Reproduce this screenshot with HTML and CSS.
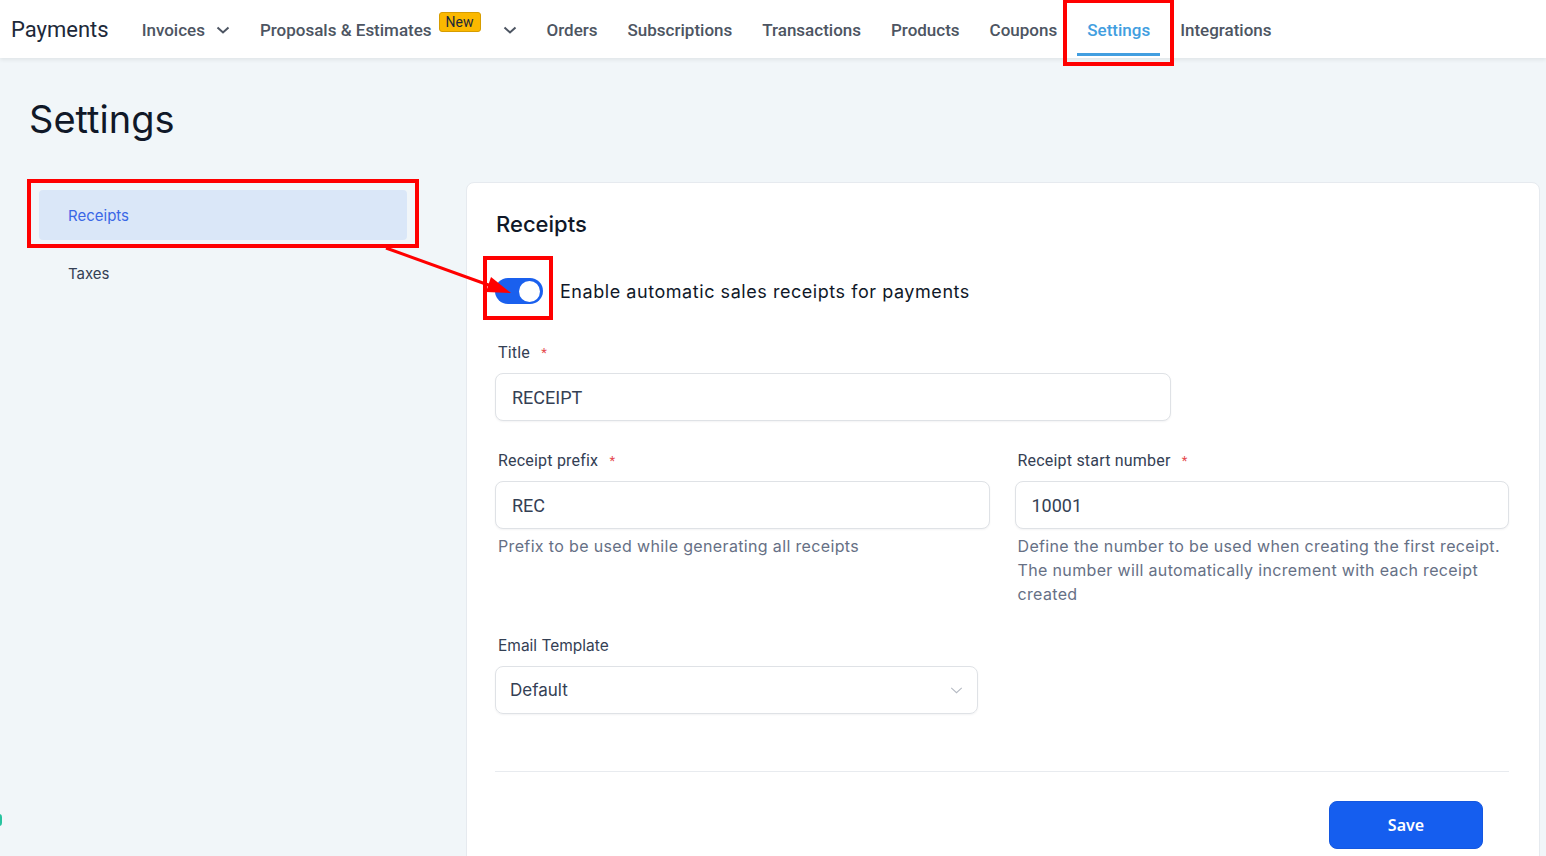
FILE: index.html
```html
<!DOCTYPE html>
<html lang="en">
<head>
  <meta charset="UTF-8" />
  <meta name="viewport" content="width=device-width, initial-scale=1.0" />
  <title>Payments - Settings</title>
  <link rel="stylesheet" href="styles.css">
</head>
<body>
  <header class="topbar">
    <div class="brand">Payments</div>
    <nav class="tabs">
      <a class="tab">Invoices
        <svg class="chev" viewBox="0 0 14 8"><path d="M1.5 1.5 7 6.5l5.5-5"/></svg>
      </a>
      <a class="tab">Proposals &amp; Estimates
        <span class="badge">New</span>
        <svg class="chev chev-far" viewBox="0 0 14 8"><path d="M1.5 1.5 7 6.5l5.5-5"/></svg>
      </a>
      <a class="tab">Orders</a>
      <a class="tab">Subscriptions</a>
      <a class="tab">Transactions</a>
      <a class="tab">Products</a>
      <a class="tab">Coupons</a>
      <a class="tab active marked">Settings</a>
      <a class="tab">Integrations</a>
    </nav>
  </header>

  <main class="page">
    <h1 class="page-title">Settings</h1>

    <div class="layout">
      <aside class="side-menu">
        <a class="side-item active marked">Receipts</a>
        <a class="side-item">Taxes</a>
      </aside>

      <section class="card">
        <h2>Receipts</h2>

        <div class="switch-row">
          <span class="switch on marked"><span class="knob"></span></span>
          <span class="switch-label">Enable automatic sales receipts for payments</span>
        </div>

        <div class="field field-title">
          <label>Title <span class="req">*</span></label>
          <input class="input" type="text" value="RECEIPT" />
        </div>

        <div class="field-row">
          <div class="field">
            <label>Receipt prefix <span class="req">*</span></label>
            <input class="input" type="text" value="REC" />
            <p class="help">Prefix to be used while generating all receipts</p>
          </div>
          <div class="field">
            <label>Receipt start number <span class="req">*</span></label>
            <input class="input" type="text" value="10001" />
            <p class="help">Define the number to be used when creating the first receipt. The number will automatically increment with each receipt created</p>
          </div>
        </div>

        <div class="field field-email">
          <label class="label-inter">Email Template</label>
          <div class="select">
            <span>Default</span>
            <svg class="select-chev" viewBox="0 0 14 8"><path d="M1 1l6 5.5L13 1"/></svg>
          </div>
        </div>

        <hr class="divider" />

        <div class="card-footer">
          <button class="btn-save">Save</button>
        </div>
      </section>
    </div>
  </main>

  <!-- callout arrow from the side menu to the switch -->
  <svg class="callout" viewBox="0 0 1546 856">
    <line x1="386" y1="248" x2="494" y2="287" stroke="#f00" stroke-width="3"/>
    <polygon points="511,293 491,277 486,292" fill="#f00"/>
  </svg>

  <span class="chat-blip"></span>
</body>
</html>
```

FILE: styles.css
```css
* {
  box-sizing: border-box;
  margin: 0;
  padding: 0;
}

body {
  font-family: Inter, "Noto Sans", sans-serif;
  background: #f1f6f9;
  color: #101828;
  height: 100vh;
  overflow: hidden;
  position: relative;
}

a {
  text-decoration: none;
  color: inherit;
}

/* top navigation */
.topbar {
  display: flex;
  align-items: center;
  height: 58px;
  padding-left: 11px;
  background: #fff;
  box-shadow: 0 2px 4px rgba(0, 0, 0, 0.07);
  position: relative;
  z-index: 2;
}

.brand {
  font-family: Roboto, sans-serif;
  font-size: 22px;
  color: #1d2939;
  margin-right: 23px;
}

.tabs {
  display: flex;
  gap: 10px;
  height: 100%;
}

.tab {
  display: flex;
  align-items: center;
  height: 100%;
  padding: 1px 10px 0;
  font-family: Roboto, sans-serif;
  font-size: 17px;
  font-weight: 500;
  color: #4d5562;
  position: relative;
}

.tab.active {
  color: #429ee0;
}

.tab.active::before {
  content: "";
  position: absolute;
  left: 0;
  right: 0;
  bottom: 2px;
  height: 3px;
  background: #429ee0;
}

.chev {
  width: 14px;
  height: 8px;
  margin-left: 11px;
  fill: none;
  stroke: #4d5562;
  stroke-width: 2;
}

.chev-far {
  margin-left: 22px;
}

.badge {
  align-self: flex-start;
  margin: 11px 0 0 7px;
  padding: 0 6px;
  height: 20px;
  line-height: 18px;
  font-size: 14px;
  font-weight: 400;
  color: #1d2939;
  background: #fbb800;
  border: 1px solid #d79d00;
  border-radius: 3px;
}

/* red highlight frames */
.marked {
  position: relative;
}

.tab.marked::after {
  content: "";
  position: absolute;
  top: 0;
  left: -14px;
  right: -14px;
  bottom: -8px;
  border: 4px solid #f00;
  border-top-width: 3px;
}

.side-item.marked::after {
  content: "";
  position: absolute;
  top: -11px;
  left: -12px;
  right: -12px;
  bottom: -8px;
  border: 4px solid #f00;
}

.switch.marked::after {
  content: "";
  position: absolute;
  top: -22px;
  left: -12px;
  right: -10px;
  bottom: -16px;
  border: 4px solid #f00;
}

.callout {
  position: absolute;
  left: 0;
  top: 0;
  width: 1546px;
  height: 856px;
  pointer-events: none;
  z-index: 3;
}

/* page */
.page {
  padding: 0 6px 0 31px;
}

.page-title {
  font-size: 38px;
  font-weight: 400;
  line-height: 48px;
  color: #101828;
  margin: 37px 0 39px -2px;
}

.layout {
  display: flex;
  align-items: flex-start;
  gap: 59px;
}

.side-menu {
  width: 376px;
  padding: 8px 0 0 8px;
  display: flex;
  flex-direction: column;
  gap: 8px;
}

.side-item {
  display: flex;
  align-items: center;
  height: 50px;
  padding-left: 29px;
  border-radius: 4px;
  font-size: 15px;
  color: #344054;
}

.side-item.active {
  background: #dae7f8;
  color: #3a67e6;
}

/* settings card */
.card {
  flex: 1;
  min-height: 720px;
  background: #fff;
  border: 1px solid #e6eaef;
  border-radius: 8px;
  padding: 27px 30px 40px 28px;
}

.card h2 {
  font-size: 22px;
  font-weight: 500;
  line-height: 28px;
  color: #101828;
  margin-left: 1px;
}

.switch-row {
  display: flex;
  align-items: center;
  gap: 17px;
  margin-top: 40px;
}

.switch {
  display: flex;
  align-items: center;
  width: 48px;
  height: 26px;
  padding: 3px;
  border-radius: 13px;
  background: #1a60ee;
}

.switch.on {
  justify-content: flex-end;
}

.knob {
  width: 21px;
  height: 21px;
  border-radius: 50%;
  background: #fff;
}

.switch-label {
  font-size: 18px;
  letter-spacing: 0.55px;
  color: #101828;
}

.field {
  display: flex;
  flex-direction: column;
}

.field label {
  padding-left: 3px;
  font-family: Roboto, sans-serif;
  font-size: 16px;
  line-height: 24px;
  letter-spacing: 0.2px;
  color: #344054;
  margin-bottom: 8px;
}

.field label.label-inter {
  font-family: Inter, sans-serif;
  font-size: 15.5px;
  letter-spacing: 0;
}

.req {
  color: #e5484d;
  font-size: 13px;
  margin-left: 7px;
  vertical-align: top;
}

.field-title {
  width: 676px;
  margin-top: 37px;
}

.field-row {
  display: grid;
  grid-template-columns: 1fr 1fr;
  gap: 25px;
  margin-top: 28px;
}

.input {
  height: 48px;
  padding: 0 16px;
  border: 1px solid #dfe2e6;
  border-radius: 8px;
  box-shadow: 0 1px 2px rgba(16, 24, 40, 0.05);
  font-family: Roboto, sans-serif;
  font-size: 18px;
  color: #344054;
  outline: none;
}

.help {
  margin-top: 5px;
  padding-left: 3px;
  font-size: 16px;
  line-height: 24px;
  letter-spacing: 0.35px;
  color: #667085;
}

.field-email {
  width: 483px;
  margin-top: 28px;
}

.select {
  display: flex;
  align-items: center;
  justify-content: space-between;
  height: 48px;
  padding: 0 14px;
  border: 1px solid #dfe2e6;
  border-radius: 8px;
  box-shadow: 0 1px 2px rgba(16, 24, 40, 0.05);
  font-size: 17px;
  color: #344054;
}

.select-chev {
  width: 13px;
  height: 7px;
  fill: none;
  stroke: #b4b9c2;
  stroke-width: 1.2;
}

.divider {
  border: none;
  border-top: 1px solid #e8ebef;
  margin-top: 57px;
}

.card-footer {
  display: flex;
  justify-content: flex-end;
  padding-right: 26px;
  margin-top: 29px;
}

.btn-save {
  width: 154px;
  height: 48px;
  border: 1px solid #1457e0;
  border-radius: 8px;
  background: #155eef;
  color: #fff;
  font-family: "Noto Sans", sans-serif;
  font-size: 16px;
  font-weight: 600;
}

.chat-blip {
  position: absolute;
  left: -4px;
  top: 814px;
  width: 6px;
  height: 12px;
  border-radius: 3px;
  background: #27c39f;
}
```
